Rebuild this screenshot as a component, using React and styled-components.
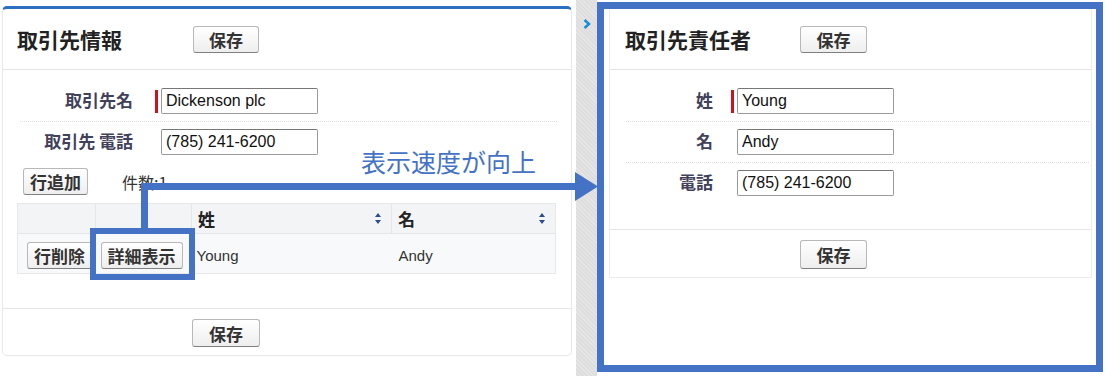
import React from "react";
import styled, { createGlobalStyle } from "styled-components";

const GlobalStyle = createGlobalStyle`
  body {
    margin: 0;
    background: #fff;
    font-family: "Liberation Sans", "Noto Sans CJK JP", sans-serif;
  }
`;

const jp = `"Noto Sans CJK JP", "Liberation Sans", sans-serif`;
const blue = "#4472c4";

const Page = styled.div`
  position: relative;
  display: flex;
  width: 1105px;
  height: 376px;
  overflow: hidden;
`;

const LeftCol = styled.div`
  width: 576px;
  padding: 6px 0 0 2px;
  box-sizing: border-box;
`;

const Panel = styled.div`
  width: 570px;
  height: 350px;
  box-sizing: border-box;
  border: 1px solid #e8e8e8;
  border-top: 3px solid #2a6fc0;
  border-radius: 5px;
  display: flex;
  flex-direction: column;
`;

const Header = styled.div`
  height: 60px;
  border-bottom: 1px solid #e4e4e4;
  display: flex;
  align-items: center;
  padding-left: ${(p) => p.$pad}px;
`;

const Title = styled.h2`
  margin: 0;
  width: ${(p) => p.$w}px;
  font-family: ${jp};
  font-size: 21px;
  font-weight: 700;
  color: #222;
`;

const Button = styled.button`
  height: ${(p) => p.$h || 27}px;
  min-width: ${(p) => p.$w || 0}px;
  padding: 0 6px;
  box-sizing: border-box;
  white-space: nowrap;
  font-family: ${jp};
  font-size: 17px;
  font-weight: 700;
  color: #333;
  background: linear-gradient(#ffffff, #eeeeee);
  border: 1px solid #b8b8b8;
  border-bottom-color: #808080;
  border-radius: 3px;
  line-height: 1;
`;

const Rows = styled.div`
  padding: 11px ${(p) => p.$padR}px ${(p) => p.$padB}px ${(p) => p.$padL}px;
`;

const FieldRow = styled.div`
  height: 40px;
  display: flex;
  align-items: center;
  border-bottom: 1px dotted #dedede;
  &:last-child {
    border-bottom: none;
  }
`;

const Label = styled.label`
  width: ${(p) => p.$w}px;
  margin-right: ${(p) => p.$gap}px;
  margin-top: -3px;
  text-align: right;
  font-family: ${jp};
  font-size: 17px;
  font-weight: 700;
  color: #41415a;
`;

const Required = styled.span`
  width: 3px;
  height: 23px;
  margin-right: 3px;
  background: ${(p) => (p.$on ? "#c8141e" : "transparent")};
`;

const Input = styled.input`
  width: 157px;
  height: 26px;
  box-sizing: border-box;
  padding: 0 4px;
  border: 1px solid #9a9a9a;
  border-top-color: #777;
  border-radius: 2px;
  font-family: "Liberation Sans", sans-serif;
  font-size: 16px;
  color: #111;
  background: #fff;
  outline: none;
`;

const Toolbar = styled.div`
  display: flex;
  align-items: center;
  gap: 34px;
  margin: 6px 0 0 20px;
`;

const Count = styled.span`
  font-family: ${jp};
  font-size: 16px;
  color: #333;
`;

const Table = styled.table`
  margin: 8px 0 0 14px;
  width: 538px;
  table-layout: fixed;
  border-collapse: collapse;
  border: 1px solid #e6e8ec;
  font-size: 15px;
`;

const Th = styled.th`
  box-sizing: border-box;
  height: 30px;
  width: ${(p) => p.$w}px;
  padding: 0 10px 0 6px;
  background: #f3f4f6;
  border-left: 1px solid #e4e6ea;
  text-align: left;
  font-family: ${jp};
  font-size: 17px;
  font-weight: 700;
  color: #222;
  &:first-child {
    border-left: none;
  }
`;

const ThInner = styled.div`
  display: flex;
  align-items: center;
  justify-content: space-between;
`;

const Td = styled.td`
  box-sizing: border-box;
  height: 40px;
  padding: 3px 0 0 ${(p) => p.$pl ?? 5}px;
  background: #f8f9fb;
  border-top: 1px solid #e4e6ea;
  color: #333;
  font-family: "Liberation Sans", sans-serif;
  white-space: nowrap;
`;

const Footer = styled.div`
  margin-top: auto;
  border-top: 1px solid #e6e6e6;
  display: flex;
  padding: 10px 0 8px ${(p) => p.$pad}px;
`;

const Gutter = styled.div`
  width: 21px;
  height: 376px;
  background-color: #dedede;
  background-image: repeating-linear-gradient(45deg, rgba(255, 255, 255, 0.25) 0 1px, transparent 1px 3px);
  padding: 15px 0 0 7px;
  box-sizing: border-box;
`;

const BlueFrame = styled.div`
  margin-top: 2px;
  width: 506px;
  height: 370px;
  box-sizing: border-box;
  border: 7px solid ${blue};
  background: #fff;
`;

const InnerPanel = styled.div`
  margin-left: 5px;
  width: 483px;
  box-sizing: border-box;
  border: 1px solid #ececec;
  border-top: none;
`;

const Highlight = styled.div`
  position: absolute;
  left: 90px;
  top: 228px;
  width: 105px;
  height: 52px;
  box-sizing: border-box;
  border: 6px solid ${blue};
`;

const Line = styled.div`
  position: absolute;
  background: ${blue};
  left: ${(p) => p.$x}px;
  top: ${(p) => p.$y}px;
  width: ${(p) => p.$w}px;
  height: ${(p) => p.$h}px;
`;

const Arrowhead = styled.svg`
  position: absolute;
  left: 575px;
  top: 172px;
`;

const Callout = styled.div`
  position: absolute;
  left: 361px;
  top: 149px;
  font-family: ${jp};
  font-size: 25px;
  line-height: 25px;
  color: ${blue};
`;

const SortIcon = () => (
  <svg width="6" height="11" viewBox="0 0 6 11">
    <path d="M3 0 L6 4 L0 4 Z M3 11 L6 7 L0 7 Z" fill="#2c4b8c" />
  </svg>
);

const Field = ({ label, value, required, lw, gap }) => (
  <FieldRow>
    <Label $w={lw} $gap={gap}>{label}</Label>
    <Required $on={required} />
    <Input readOnly value={value} />
  </FieldRow>
);

export default function App() {
  return (
    <>
      <GlobalStyle />
      <Page>
        <LeftCol>
          <Panel>
            <Header $pad={14}>
              <Title $w={176}>取引先情報</Title>
              <Button $w={66}>保存</Button>
            </Header>
            <Rows $padL={17} $padR={14} $padB={0}>
              <Field label="取引先名" value="Dickenson plc" required lw={113} gap={22} />
              <Field label="取引先 電話" value="(785) 241-6200" lw={113} gap={22} />
            </Rows>
            <Toolbar>
              <Button>行追加</Button>
              <Count>件数:1</Count>
            </Toolbar>
            <Table>
              <thead>
                <tr>
                  <Th $w={78} />
                  <Th $w={96} />
                  <Th $w={200}>
                    <ThInner>
                      姓 <SortIcon />
                    </ThInner>
                  </Th>
                  <Th $w={164}>
                    <ThInner>
                      名 <SortIcon />
                    </ThInner>
                  </Th>
                </tr>
              </thead>
              <tbody>
                <tr>
                  <Td $pl={9}>
                    <Button>行削除</Button>
                  </Td>
                  <Td $pl={5}>
                    <Button>詳細表示</Button>
                  </Td>
                  <Td>Young</Td>
                  <Td $pl={7}>Andy</Td>
                </tr>
              </tbody>
            </Table>
            <Footer $pad={189}>
              <Button $w={68} $h={28}>保存</Button>
            </Footer>
          </Panel>
        </LeftCol>

        <Gutter>
          <svg width="8" height="10" viewBox="0 0 8 10">
            <path d="M1.5 1 L6 5 L1.5 9" fill="none" stroke="#1a8ad4" strokeWidth="2.4" />
          </svg>
        </Gutter>

        <BlueFrame>
          <InnerPanel>
            <Header $pad={15}>
              <Title $w={175}>取引先責任者</Title>
              <Button $w={67}>保存</Button>
            </Header>
            <Rows $padL={16} $padR={2} $padB={26}>
              <Field label="姓" value="Young" required lw={87} gap={18} />
              <Field label="名" value="Andy" lw={87} gap={18} />
              <Field label="電話" value="(785) 241-6200" lw={87} gap={18} />
            </Rows>
            <Footer $pad={190}>
              <Button $w={67} $h={29}>保存</Button>
            </Footer>
          </InnerPanel>
        </BlueFrame>

        <Highlight />
        <Line $x={141} $y={183} $w={7} $h={46} />
        <Line $x={141} $y={183} $w={436} $h={7} />
        <Arrowhead width="23" height="29" viewBox="0 0 23 29">
          <path d="M0 0 L23 14.5 L0 29 Z" fill={blue} />
        </Arrowhead>
        <Callout>表示速度が向上</Callout>
      </Page>
    </>
  );
}
